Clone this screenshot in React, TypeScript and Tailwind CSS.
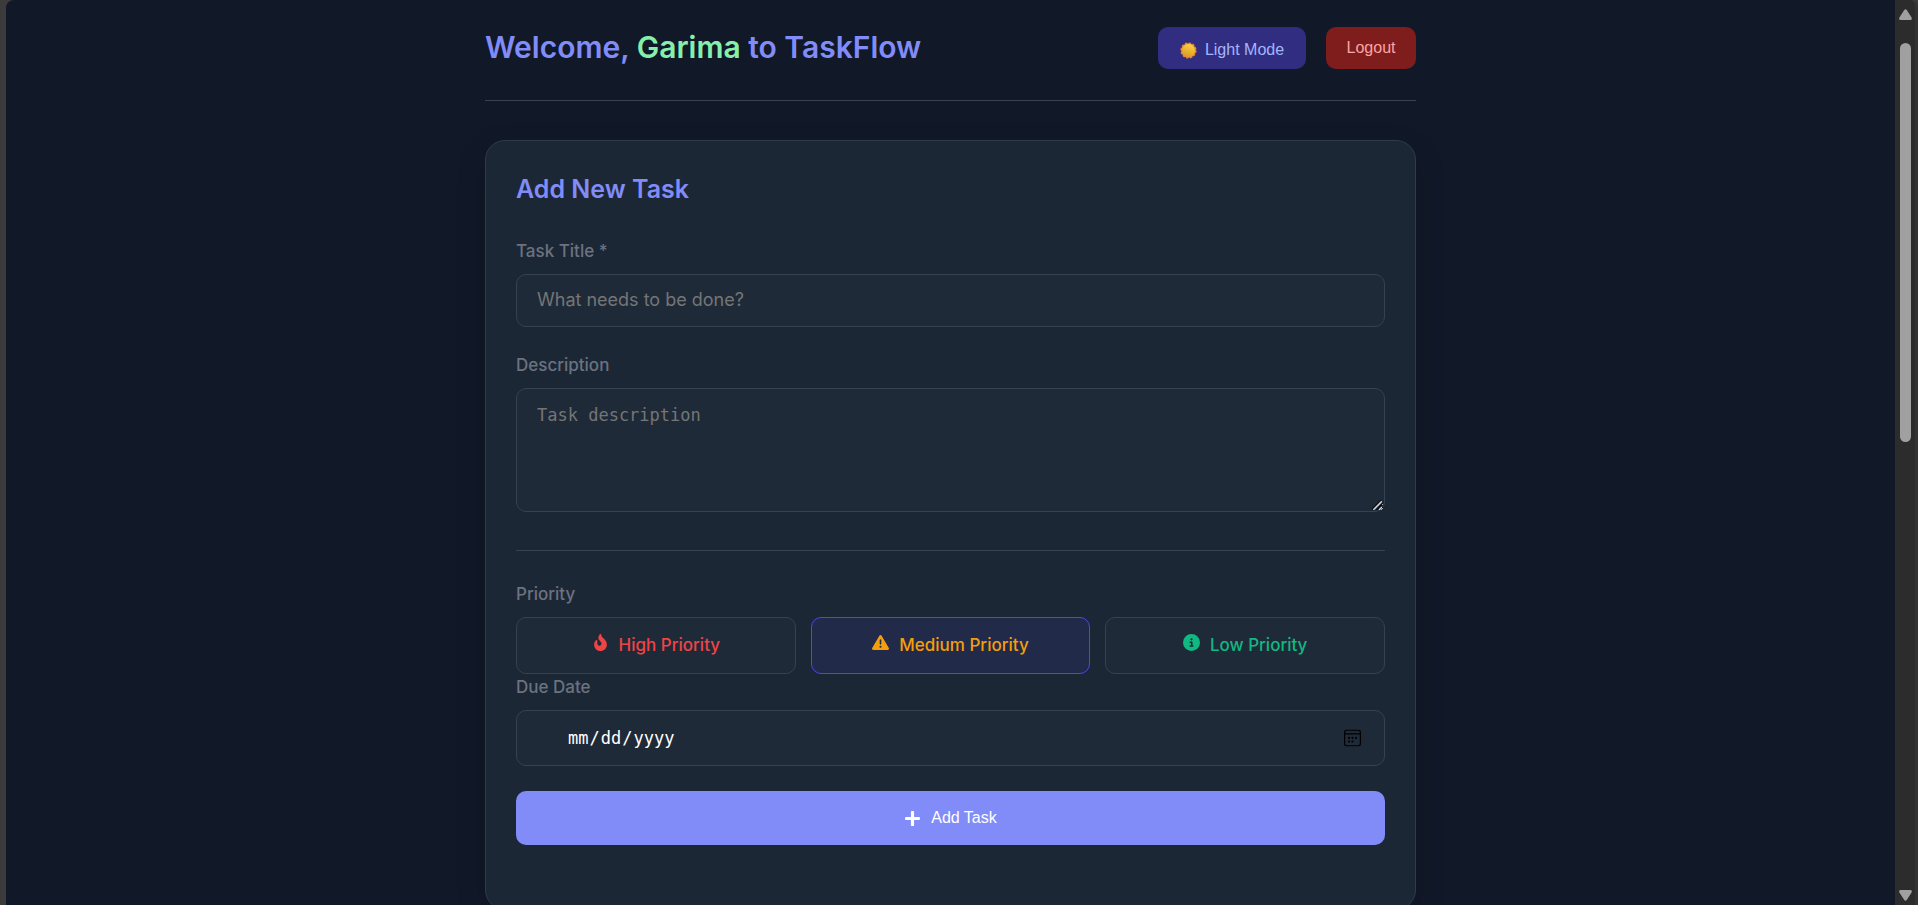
import { useState } from "react";
import { FaFire, FaPlus } from "react-icons/fa";
import { FaCircleInfo, FaTriangleExclamation } from "react-icons/fa6";

const priorities = [
  { id: "high", label: "High Priority", Icon: FaFire, color: "text-[#ef4444]" },
  { id: "medium", label: "Medium Priority", Icon: FaTriangleExclamation, color: "text-[#f59e0b]" },
  { id: "low", label: "Low Priority", Icon: FaCircleInfo, color: "text-[#10b981]" },
];

const labelClass = "block text-[17px] leading-6 font-medium text-[#6b7280]";
const fieldClass =
  "block w-full rounded-[10px] border border-[#374151] bg-[#1f2a39] px-5 text-white placeholder:text-[#757575] outline-none";

function Sun() {
  return (
    <svg viewBox="0 0 18 18" className="size-[17px]" aria-hidden="true">
      <defs>
        <linearGradient id="sun" x1="0.7" y1="0" x2="0.4" y2="1">
          <stop offset="0" stopColor="#ffd43b" />
          <stop offset="1" stopColor="#d99a2b" />
        </linearGradient>
      </defs>
      <circle cx="9" cy="9" r="7.7" fill="none" stroke="#f0802f" strokeWidth="1.8" strokeDasharray="2.4 1.63" />
      <circle cx="9" cy="9" r="7.8" fill="#f08c2e" />
      <circle cx="9" cy="9" r="6.8" fill="url(#sun)" />
    </svg>
  );
}

function CalendarIcon() {
  return (
    <svg
      viewBox="0 0 17 17"
      className="pointer-events-none absolute top-1/2 right-6 size-[17px] -translate-y-1/2"
      fill="none"
      stroke="#000"
      aria-hidden="true"
    >
      <rect x="0.6" y="0.6" width="15.8" height="15.8" rx="2.4" strokeWidth="1.2" />
      <path d="M1 4.3H16" strokeWidth="1.2" />
      <g fill="#000" stroke="none">
        <circle cx="5" cy="8.4" r="1.1" />
        <circle cx="8.5" cy="8.4" r="1.1" />
        <circle cx="12" cy="8.4" r="1.1" />
        <circle cx="5" cy="12" r="1.1" />
        <circle cx="8.5" cy="12" r="1.1" />
      </g>
    </svg>
  );
}

function ResizeGrip() {
  return (
    <svg viewBox="0 0 10 10" className="pointer-events-none absolute right-[3px] bottom-0.5 size-2.5" fill="none" aria-hidden="true">
      <path d="M0 9.2L9.2 0M5 10L10 5" stroke="#0b0f16" strokeWidth="1.4" />
      <path d="M1.4 9.8L9.8 1.4M7 10L10 7" stroke="#d4d4d4" strokeWidth="1.5" />
    </svg>
  );
}

function ScrollTrack() {
  return (
    <div className="flex w-[23px] shrink-0 flex-col items-center rounded-tr-lg border-r-[3px] border-[#333333] bg-[#2c2c2c] pt-[9px] pb-1" aria-hidden="true">
      <svg viewBox="0 0 13 11" className="h-[11px] w-[13px]" fill="#a0a0a0">
        <path d="M5.1 1.2Q6.5-.7 7.9 1.2L12.6 8.6Q13.4 11 11.4 11H1.6Q-.4 11 .4 8.6Z" />
      </svg>
      <div className="mt-[23px] h-[399px] w-[11px] rounded-full bg-[#a0a0a0]" />
      <svg viewBox="0 0 13 11" className="mt-auto h-[11px] w-[13px]" fill="#a0a0a0">
        <path d="M5.1 9.8Q6.5 11.7 7.9 9.8L12.6 2.4Q13.4 0 11.4 0H1.6Q-.4 0 .4 2.4Z" />
      </svg>
    </div>
  );
}

export default function App() {
  const [priority, setPriority] = useState("medium");

  return (
    <div className="flex h-screen overflow-hidden bg-[#3b3b3b] pl-1.5 font-['Inter',sans-serif]">
      <main className="min-w-0 flex-1 overflow-hidden rounded-tl-lg bg-[#111827] px-5">
        <div className="mx-auto max-w-[931px]">
          <header className="flex items-center justify-between border-b border-[#374151] pt-[27px] pb-[31px]">
            <h1 className="pb-0.5 text-[30px] leading-10 font-semibold text-[#818cf8]">
              Welcome, <span className="text-[#86efac]">Garima</span> to TaskFlow
            </h1>
            <div className="flex gap-5 font-['Liberation_Sans',Arial,sans-serif] text-base">
              <button type="button" className="flex h-[42px] min-w-[148px] items-center justify-center gap-2 rounded-[10px] bg-[#312e81] px-5 pt-1 text-[#a5b4fc]">
                <Sun />
                Light Mode
              </button>
              <button type="button" className="h-[42px] min-w-[90px] rounded-[10px] bg-[#7f1d1d] px-5 text-[#fca5a5]">
                Logout
              </button>
            </div>
          </header>

          <section className="mt-[39px] rounded-[20px] border border-[#2f3b4a] bg-[#1c2736] px-[30px] pt-7 pb-16 shadow-[0_10px_30px_rgba(0,0,0,0.15)]">
            <h2 className="text-[25px] leading-10 font-semibold text-[#818cf8]">Add New Task</h2>
            <form onSubmit={(e) => e.preventDefault()}>
              <div className="mt-[30px]">
                <label htmlFor="title" className={labelClass}>Task Title *</label>
                <input
                  id="title"
                  type="text"
                  placeholder="What needs to be done?"
                  className={`${fieldClass} mt-[11px] h-[53px] pb-0.5 text-lg`}
                />
              </div>
              <div className="mt-[26px]">
                <label htmlFor="description" className={labelClass}>Description</label>
                <div className="relative mt-[11px]">
                  <textarea
                    id="description"
                    placeholder="Task description"
                    className={`${fieldClass} h-[124px] resize-y py-4 font-['DejaVu_Sans_Mono',monospace] text-[17px] leading-5`}
                  />
                  <ResizeGrip />
                </div>
              </div>
              <hr className="mt-[38px] border-[#374151]" />
              <fieldset className="mt-[31px]">
                <legend className={labelClass}>Priority</legend>
                <div className="mt-[11px] grid grid-cols-3 gap-[15px]">
                  {priorities.map(({ id, label, Icon, color }) => (
                    <label
                      key={id}
                      className={`flex h-[57px] cursor-pointer items-center justify-center gap-2.5 rounded-[10px] border text-[17px] font-medium ${color} ${
                        priority === id ? "border-[#4f46e5] bg-[#212a49]" : "border-[#374151] bg-[#1f2a39]"
                      }`}
                    >
                      <input
                        type="radio"
                        name="priority"
                        value={id}
                        checked={priority === id}
                        onChange={() => setPriority(id)}
                        className="sr-only"
                      />
                      <span className="pb-1.5"><Icon className="h-[17px] w-auto" /></span>
                      {label}
                    </label>
                  ))}
                </div>
              </fieldset>
              <label htmlFor="due" className={`${labelClass} mt-px`}>Due Date</label>
              <div className="relative mt-[11px]">
                <input
                  id="due"
                  type="date"
                  className={`${fieldClass} h-14 pt-0.5 pl-[50px] font-['DejaVu_Sans_Mono',monospace] text-[17px] font-medium [&::-webkit-calendar-picker-indicator]:opacity-0`}
                />
                <CalendarIcon />
              </div>
              <button
                type="submit"
                className="mt-[25px] flex h-[54px] w-full items-center justify-center gap-2.5 rounded-[10px] bg-[#818cf8] font-['Liberation_Sans',Arial,sans-serif] text-base font-medium text-white"
              >
                <FaPlus className="size-[17px]" />
                Add Task
              </button>
            </form>
          </section>
        </div>
      </main>
      <ScrollTrack />
    </div>
  );
}
